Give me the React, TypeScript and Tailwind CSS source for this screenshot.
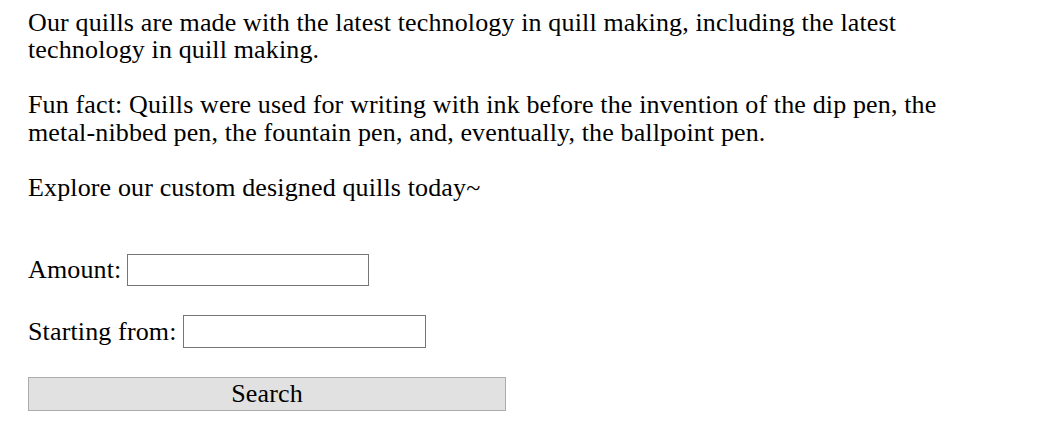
export default function App() {
  return (
    <div className="min-h-[439px] bg-white pl-[28px] pr-[28px] pt-[8.5px] text-black font-['Liberation_Serif',serif] text-[26px] leading-[27.5px] tracking-[0.14px]">
      <p className="max-w-[947px]">
        Our quills are made with the latest technology in quill making, including the latest technology in quill making.
      </p>
      <p className="mt-[27.5px] max-w-[947px]">
        Fun fact: Quills were used for writing with ink before the invention of the dip pen, the metal-nibbed pen, the fountain pen, and, eventually, the ballpoint pen.
      </p>
      <p className="mt-[27.5px]">Explore our custom designed quills today~</p>

      <form className="mt-[53px] w-[478px]" onSubmit={(e) => e.preventDefault()}>
        <div className="flex items-center gap-[6px] h-[32px]">
          <label htmlFor="amount">Amount:</label>
          <input id="amount" type="text" className="w-[242px] h-[32px] border border-[#767676] bg-white px-1 text-[16px] outline-none" />
        </div>
        <div className="flex items-center gap-[6px] h-[33px] mt-[29px]">
          <label htmlFor="start">Starting from:</label>
          <input id="start" type="text" className="w-[243px] h-[33px] border border-[#767676] bg-white px-1 text-[16px] outline-none" />
        </div>
        <button type="submit" className="mt-[29px] w-[478px] h-[34px] border border-[#acacac] bg-[#e1e1e1] text-[26px] leading-[27.5px] text-black">
          Search
        </button>
      </form>
    </div>
  );
}
